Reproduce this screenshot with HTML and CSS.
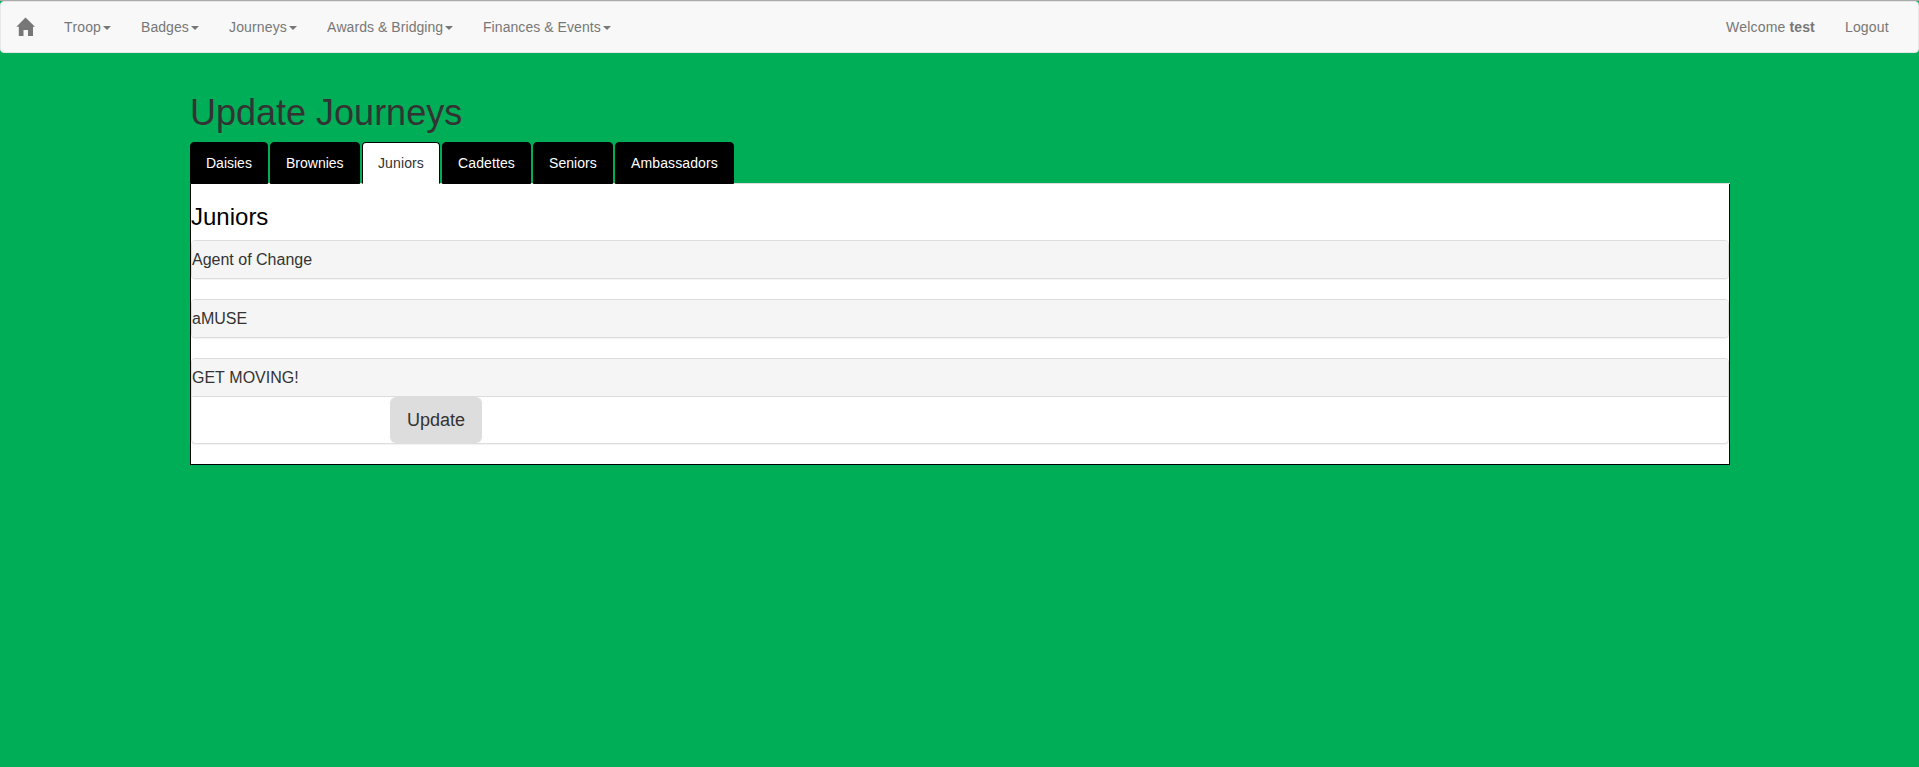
FILE: index.html
```html
<!DOCTYPE html>
<html lang="en">
<head>
<meta charset="utf-8">
<title>Update Journeys</title>
<link rel="stylesheet" href="styles.css">
</head>
<body>
<nav class="navbar">
  <a class="brand" href="#" aria-label="Home">
    <svg class="home" viewBox="0 0 19 19"><path d="M9.5 0.5L19 9.8H17V19H12V13H7.5V19H2.8V9.8H0.4Z"/></svg>
  </a>
  <ul class="menu">
    <li class="troop"><a href="#">Troop<span class="caret"></span></a></li>
    <li class="badges"><a href="#">Badges<span class="caret"></span></a></li>
    <li class="journeys"><a href="#">Journeys<span class="caret"></span></a></li>
    <li class="awards"><a href="#">Awards &amp; Bridging<span class="caret"></span></a></li>
    <li class="finances"><a href="#">Finances &amp; Events<span class="caret"></span></a></li>
  </ul>
  <ul class="menu menu-right">
    <li class="welcome"><a href="#">Welcome <strong>test</strong></a></li>
    <li class="logout"><a href="#">Logout</a></li>
  </ul>
</nav>
<main class="page">
  <h1>Update Journeys</h1>
  <ul class="tabs">
    <li class="daisies"><a href="#">Daisies</a></li>
    <li class="brownies"><a href="#">Brownies</a></li>
    <li class="juniors"><a class="active" href="#">Juniors</a></li>
    <li class="cadettes"><a href="#">Cadettes</a></li>
    <li class="seniors"><a href="#">Seniors</a></li>
    <li class="ambassadors"><a href="#">Ambassadors</a></li>
  </ul>
  <section class="content">
    <h3>Juniors</h3>
    <div class="panel"><h4>Agent of Change</h4></div>
    <div class="panel"><h4>aMUSE</h4></div>
    <div class="panel">
      <h4>GET MOVING!</h4>
      <div class="actions"><button class="btn" type="button">Update</button></div>
    </div>
  </section>
</main>
</body>
</html>
```

FILE: styles.css
```css
* { box-sizing: border-box; }

html { background: #00ae58; }

body {
  margin: 0;
  border-top: 1px solid #aaa;
  background: #00ae58;
  color: #333;
  font: 14px/20px "Liberation Sans", Arial, sans-serif;
  font-kerning: none;
}

h1, h3, h4 { margin: 0; font-weight: 500; }

ul { margin: 0; padding: 0; list-style: none; }

a { color: inherit; text-decoration: none; }

.navbar {
  display: flex;
  height: 52px;
  padding-right: 14px;
  border: 1px solid #e7e7e7;
  border-radius: 4px;
  background: #f8f8f8;
  color: #777;
}

.brand { width: 48px; padding: 15px 0 0 15px; }

.home { display: block; width: 19px; height: 19px; fill: #777; }

.menu { display: flex; }

.menu a { display: block; padding: 15px 0 15px 15px; letter-spacing: .06px; white-space: nowrap; }

.menu-right { margin-left: auto; }

.troop { width: 77px; }
.badges { width: 88px; }
.journeys { width: 98px; }
.awards { width: 156px; }
.finances { width: 158px; }
.welcome { width: 119px; }
.logout { width: 74px; }

.menu .journeys a, .menu .welcome a, .menu .logout a { letter-spacing: .15px; }

.caret {
  display: inline-block;
  margin-left: 2px;
  vertical-align: middle;
  border-top: 4px solid;
  border-right: 4px solid transparent;
  border-left: 4px solid transparent;
}

.page { margin: 0 189px 0 190px; padding-top: 40px; }

h1 { margin-bottom: 10px; font-size: 36px; line-height: 39px; }

.tabs { display: flex; gap: 2px; height: 42px; border-bottom: 1px solid #ddd; }

.tabs li { height: 42px; }

.tabs a {
  display: block;
  padding: 10px 0 10px 15px;
  border: 1px solid #000;
  border-radius: 4px 4px 0 0;
  background: #000;
  color: #fff;
}

.tabs .active { border-bottom-color: #fff; background: #fff; color: #333; }

.daisies { width: 78px; }
.brownies { width: 90px; }
.juniors { width: 78px; letter-spacing: .12px; }
.cadettes { width: 89px; letter-spacing: .12px; }
.seniors { width: 80px; letter-spacing: .06px; }
.ambassadors { width: 119px; letter-spacing: .12px; }

.content {
  padding: 20px 0;
  border: 1px solid #000;
  border-top: 0;
  background: #fff;
}

h3 { margin-bottom: 10px; color: #000; font-size: 24px; line-height: 26px; }

.panel {
  border: 1px solid #ddd;
  border-radius: 4px;
  background: #fff;
  box-shadow: 0 1px 1px rgba(0, 0, 0, .05);
}

.panel + .panel { margin-top: 20px; }

h4 {
  padding: 10px 0;
  border-radius: 3px;
  background: #f5f5f5;
  font-size: 16px;
  line-height: 17px;
}

.actions { display: flex; padding-left: 198px; border-top: 1px solid #ddd; }

.btn {
  width: 92px;
  height: 46px;
  padding: 0;
  border: 0;
  border-radius: 6px;
  background: #ddd;
  color: #333;
  font: 18px/24px "Liberation Sans", Arial, sans-serif;
}
```
